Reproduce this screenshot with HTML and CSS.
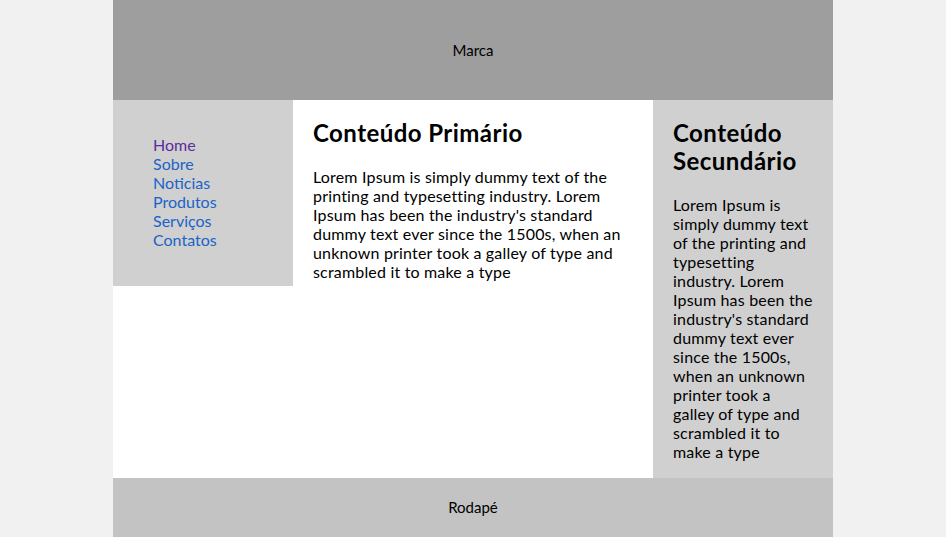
FILE: index.html
```html
<!DOCTYPE html>
<html lang="pt">
<head>
<meta charset="utf-8">
<title>Layout</title>
<link rel="stylesheet" href="styles.css">
</head>
<body>
<div class="page">
  <header class="brand">Marca</header>
  <nav class="menu">
    <ul>
      <li><a class="visited" href="#">Home</a></li>
      <li><a href="#">Sobre</a></li>
      <li><a href="#">Noticias</a></li>
      <li><a href="#">Produtos</a></li>
      <li><a href="#">Serviços</a></li>
      <li><a href="#">Contatos</a></li>
    </ul>
  </nav>
  <main class="primary">
    <h1>Conteúdo Primário</h1>
    <p>Lorem Ipsum is simply dummy text of the printing and typesetting industry. Lorem Ipsum has been the industry's standard dummy text ever since the 1500s, when an unknown printer took a galley of type and scrambled it to make a type</p>
  </main>
  <aside class="secondary">
    <h1>Conteúdo Secundário</h1>
    <p>Lorem Ipsum is simply dummy text of the printing and typesetting industry. Lorem Ipsum has been the industry's standard dummy text ever since the 1500s, when an unknown printer took a galley of type and scrambled it to make a type</p>
  </aside>
  <footer class="foot">Rodapé</footer>
</div>
</body>
</html>
```
FILE: styles.css
```css
html, body {
  margin: 0;
  padding: 0;
}
body {
  background: #f1f1f1;
  font-family: "Trebuchet MS", Lato, "Liberation Sans", sans-serif;
  font-size: 16px;
  line-height: 19px;
  color: #000;
}
.page {
  width: 720px;
  margin: 0 auto;
  background: #fff;
  display: grid;
  grid-template-columns: 180px 360px 180px;
  grid-template-rows: 100px auto 59px;
}
.brand {
  grid-column: 1 / 4;
  background: #9e9e9e;
  display: flex;
  align-items: center;
  justify-content: center;
  font-size: 15px;
}
.menu {
  background: #d0d0d0;
  align-self: start;
  padding: 20px 0;
}
.menu ul {
  list-style: none;
  margin: 15px 0 17px;
  padding: 0 0 0 40px;
}
.menu a {
  color: #1a63c8;
  text-decoration: none;
}
.menu a.visited {
  color: #5b2d9c;
}
.primary {
  padding: 19px 20px 20px;
}
.secondary {
  background: #d0d0d0;
  padding: 19px 20px 1px;
}
h1 {
  font-size: 24px;
  line-height: 28px;
  margin: 0 0 20px;
  font-weight: bold;
  letter-spacing: 0.45px;
}
p {
  margin: 0 0 16px;
  letter-spacing: 0.18px;
}
.foot {
  grid-column: 1 / 4;
  background: #c3c3c3;
  display: flex;
  align-items: center;
  justify-content: center;
  font-size: 15px;
}
```
